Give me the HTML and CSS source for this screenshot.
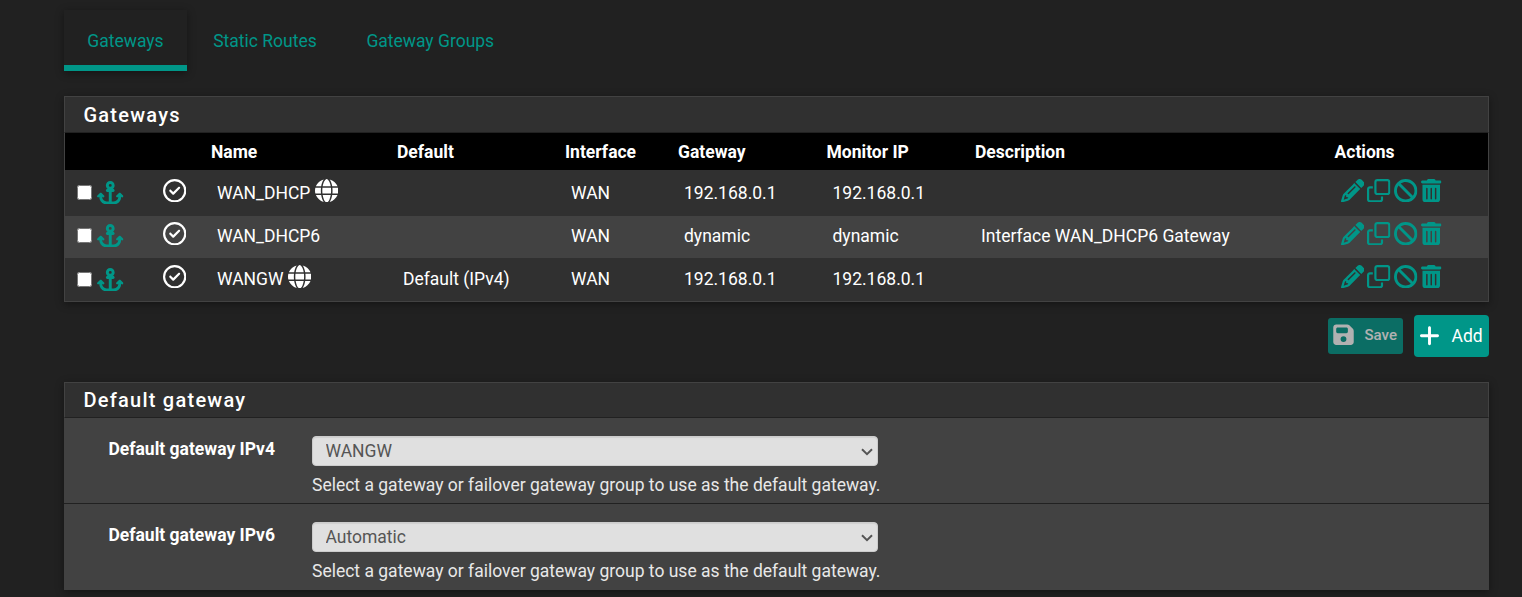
FILE: index.html
```html
<!DOCTYPE html>
<html lang="en">
<head>
    <meta charset="UTF-8">
    <meta name="viewport" content="width=device-width, initial-scale=1.0">
    <title>System: Routing: Gateways</title>
    <link rel="stylesheet" href="styles.css">
</head>
<body>
    <svg class="sprite">
        <symbol id="anchor" viewBox="0 0 576 512"><path d="M320 96a32 32 0 1 1 -64 0 32 32 0 1 1 64 0zm21.1 80C367 158.8 384 129.4 384 96c0-53-43-96-96-96s-96 43-96 96c0 33.4 17 62.8 42.9 80H224c-17.7 0-32 14.3-32 32s14.3 32 32 32h32V448H208c-53 0-96-43-96-96v-6.1l7 7c9.4 9.4 24.6 9.4 33.9 0s9.4-24.6 0-33.9L97 263c-9.4-9.4-24.6-9.4-33.9 0L7 319c-9.4 9.4-9.4 24.6 0 33.9s24.6 9.4 33.9 0l7-7V352c0 88.4 71.6 160 160 160h80 80c88.4 0 160-71.6 160-160v-6.1l7 7c9.4 9.4 24.6 9.4 33.9 0s9.4-24.6 0-33.9l-56-56c-9.4-9.4-24.6-9.4-33.9 0l-56 56c-9.4 9.4-9.4 24.6 0 33.9s24.6 9.4 33.9 0l7-7V352c0 53-43 96-96 96H320V240h32c17.7 0 32-14.3 32-32s-14.3-32-32-32H341.1z"/></symbol>
        <symbol id="check" viewBox="0 0 512 512"><path d="M256 48a208 208 0 1 1 0 416 208 208 0 1 1 0-416zm0 464A256 256 0 1 0 256 0a256 256 0 1 0 0 512zM369 209c9.4-9.4 9.4-24.6 0-33.9s-24.6-9.4-33.9 0l-111 111-47-47c-9.4-9.4-24.6-9.4-33.9 0s-9.4 24.6 0 33.9l64 64c9.4 9.4 24.6 9.4 33.9 0L369 209z"/></symbol>
        <symbol id="globe" viewBox="0 0 512 512"><path d="M352 256c0 22.2-1.2 43.6-3.3 64H163.3c-2.2-20.4-3.3-41.8-3.3-64s1.2-43.6 3.3-64H348.7c2.2 20.4 3.3 41.8 3.3 64zm28.8-64H503.9c5.3 20.5 8.1 41.9 8.1 64s-2.8 43.5-8.1 64H380.8c2.1-20.6 3.2-42 3.2-64s-1.1-43.4-3.2-64zm112.6-32H376.7c-10-63.9-29.8-117.4-55.3-151.6c78.3 20.7 142 77.5 171.9 151.6zm-149.1 0H167.7c6.1-36.4 15.5-68.6 27-94.7c10.5-23.6 22.2-40.7 33.5-51.5C239.4 3.2 248.7 0 256 0s16.6 3.2 27.8 13.8c11.3 10.8 23 27.9 33.5 51.5c11.6 26 20.9 58.2 27 94.7zm-209 0H18.6C48.6 85.9 112.2 29.1 190.6 8.4C165.1 42.6 145.3 96.1 135.3 160zM8.1 192H131.2c-2.1 20.6-3.2 42-3.2 64s1.1 43.4 3.2 64H8.1C2.8 299.5 0 278.1 0 256s2.8-43.5 8.1-64zM194.7 446.6c-11.6-26-20.9-58.2-27-94.6H344.3c-6.1 36.4-15.5 68.6-27 94.6c-10.5 23.6-22.2 40.7-33.5 51.5C272.6 508.8 263.3 512 256 512s-16.6-3.2-27.8-13.8c-11.3-10.8-23-27.9-33.5-51.5zM135.3 352c10 63.9 29.8 117.4 55.3 151.6C112.2 482.9 48.6 426.1 18.6 352H135.3zm358.1 0c-30 74.1-93.6 130.9-171.9 151.6c25.5-34.2 45.2-87.7 55.3-151.6H493.4z"/></symbol>
        <symbol id="pencil" viewBox="0 0 512 512"><path d="M410.3 231l11.3-11.3-33.9-33.9-62.1-62.1L291.7 89.8l-11.3 11.3-22.6 22.6L58.6 322.9c-10.4 10.4-18 23.3-22.2 37.4L1 480.7c-2.5 8.4-.2 17.5 6.1 23.7s15.3 8.5 23.7 6.1l120.3-35.4c14.1-4.2 27-11.8 37.4-22.2L387.7 253.7 410.3 231zM160 399.4l-9.1 22.7c-4 3.1-8.5 5.4-13.3 6.9L59.4 452l23-78.1c1.4-4.9 3.8-9.4 6.9-13.3l22.7-9.1v32c0 8.8 7.2 16 16 16h32zM362.7 18.7L348.3 33.2 325.7 55.8 314.3 67.1l33.9 33.9 62.1 62.1 33.9 33.9 11.3-11.3 22.6-22.6 14.5-14.5c25-25 25-65.5 0-90.5L453.3 18.7c-25-25-65.5-25-90.5 0zm-47.4 168l-144 144c-6.2 6.2-16.4 6.2-22.6 0s-6.2-16.4 0-22.6l144-144c6.2-6.2 16.4-6.2 22.6 0s6.2 16.4 0 22.6z"/></symbol>
        <symbol id="clone" viewBox="0 0 512 512"><path d="M64 464H288c8.8 0 16-7.2 16-16V384h48v64c0 35.3-28.7 64-64 64H64c-35.3 0-64-28.7-64-64V224c0-35.3 28.7-64 64-64h64v48H64c-8.8 0-16 7.2-16 16V448c0 8.8 7.2 16 16 16zM224 304H448c8.8 0 16-7.2 16-16V64c0-8.8-7.2-16-16-16H224c-8.8 0-16 7.2-16 16V288c0 8.8 7.2 16 16 16zm-64-16V64c0-35.3 28.7-64 64-64H448c35.3 0 64 28.7 64 64V288c0 35.3-28.7 64-64 64H224c-35.3 0-64-28.7-64-64z"/></symbol>
        <symbol id="ban" viewBox="0 0 512 512"><path d="M367.2 412.5L99.5 144.8C77.1 176.1 64 214.5 64 256c0 106 86 192 192 192c41.5 0 79.9-13.1 111.2-35.5zm45.3-45.3C434.9 335.9 448 297.5 448 256c0-106-86-192-192-192c-41.5 0-79.9 13.1-111.2 35.5L412.5 367.2zM0 256a256 256 0 1 1 512 0A256 256 0 1 1 0 256z"/></symbol>
        <symbol id="trash" viewBox="0 0 448 512"><path d="M135.2 17.7C140.6 6.8 151.7 0 163.8 0H284.2c12.1 0 23.2 6.8 28.6 17.7L320 32h96c17.7 0 32 14.3 32 32s-14.3 32-32 32H32C14.3 96 0 81.7 0 64S14.3 32 32 32h96l7.2-14.3zM32 128H416V448c0 35.3-28.7 64-64 64H96c-35.3 0-64-28.7-64-64V128zm96 64c-8.8 0-16 7.2-16 16V432c0 8.8 7.2 16 16 16s16-7.2 16-16V208c0-8.8-7.2-16-16-16zm96 0c-8.8 0-16 7.2-16 16V432c0 8.8 7.2 16 16 16s16-7.2 16-16V208c0-8.8-7.2-16-16-16zm96 0c-8.8 0-16 7.2-16 16V432c0 8.8 7.2 16 16 16s16-7.2 16-16V208c0-8.8-7.2-16-16-16z"/></symbol>
        <symbol id="save" viewBox="0 0 448 512"><path d="M64 32C28.7 32 0 60.7 0 96V416c0 35.3 28.7 64 64 64H384c35.3 0 64-28.7 64-64V173.3c0-17-6.7-33.3-18.7-45.3L352 50.7C340 38.7 323.7 32 306.7 32H64zm0 96c0-17.7 14.3-32 32-32H288c17.7 0 32 14.3 32 32v64c0 17.7-14.3 32-32 32H96c-17.7 0-32-14.3-32-32V128zM224 288a64 64 0 1 1 0 128 64 64 0 1 1 0-128z"/></symbol>
        <symbol id="plus" viewBox="0 0 448 512"><path d="M256 80c0-17.7-14.3-32-32-32s-32 14.3-32 32V224H48c-17.7 0-32 14.3-32 32s14.3 32 32 32H192V432c0 17.7 14.3 32 32 32s32-14.3 32-32V288H400c17.7 0 32-14.3 32-32s-14.3-32-32-32H256V80z"/></symbol>
    </svg>

    <div class="container">
        <ul class="nav-tabs">
            <li class="active"><a href="#">Gateways</a></li>
            <li><a href="#">Static Routes</a></li>
            <li><a href="#">Gateway Groups</a></li>
        </ul>

        <div class="panel">
            <h2 class="panel-heading">Gateways</h2>
            <table class="table">
                <colgroup>
                    <col class="col-select">
                    <col class="col-status">
                    <col class="col-name">
                    <col class="col-default">
                    <col class="col-interface">
                    <col class="col-gateway">
                    <col class="col-monitor">
                    <col class="col-descr">
                    <col class="col-actions">
                </colgroup>
                <thead>
                    <tr>
                        <th></th>
                        <th></th>
                        <th>Name</th>
                        <th>Default</th>
                        <th>Interface</th>
                        <th>Gateway</th>
                        <th>Monitor IP</th>
                        <th>Description</th>
                        <th>Actions</th>
                    </tr>
                </thead>
                <tbody>
                    <tr class="row-first">
                        <td><div class="pick"><input type="checkbox"><svg class="icon anchor"><use href="#anchor"/></svg></div></td>
                        <td><div class="status"><svg class="icon"><use href="#check"/></svg></div></td>
                        <td>WAN_DHCP <svg class="icon"><use href="#globe"/></svg></td>
                        <td></td>
                        <td>WAN</td>
                        <td>192.168.0.1</td>
                        <td>192.168.0.1</td>
                        <td></td>
                        <td><div class="actions"><svg class="icon"><use href="#pencil"/></svg><svg class="icon"><use href="#clone"/></svg><svg class="icon"><use href="#ban"/></svg><svg class="icon trash"><use href="#trash"/></svg></div></td>
                    </tr>
                    <tr class="row-even">
                        <td><div class="pick"><input type="checkbox"><svg class="icon anchor"><use href="#anchor"/></svg></div></td>
                        <td><div class="status"><svg class="icon"><use href="#check"/></svg></div></td>
                        <td>WAN_DHCP6</td>
                        <td></td>
                        <td>WAN</td>
                        <td>dynamic</td>
                        <td>dynamic</td>
                        <td>Interface WAN_DHCP6 Gateway</td>
                        <td><div class="actions"><svg class="icon"><use href="#pencil"/></svg><svg class="icon"><use href="#clone"/></svg><svg class="icon"><use href="#ban"/></svg><svg class="icon trash"><use href="#trash"/></svg></div></td>
                    </tr>
                    <tr class="row-last">
                        <td><div class="pick"><input type="checkbox"><svg class="icon anchor"><use href="#anchor"/></svg></div></td>
                        <td><div class="status"><svg class="icon"><use href="#check"/></svg></div></td>
                        <td>WANGW <svg class="icon"><use href="#globe"/></svg></td>
                        <td>Default (IPv4)</td>
                        <td>WAN</td>
                        <td>192.168.0.1</td>
                        <td>192.168.0.1</td>
                        <td></td>
                        <td><div class="actions"><svg class="icon"><use href="#pencil"/></svg><svg class="icon"><use href="#clone"/></svg><svg class="icon"><use href="#ban"/></svg><svg class="icon trash"><use href="#trash"/></svg></div></td>
                    </tr>
                </tbody>
            </table>
        </div>

        <nav class="action-buttons">
            <button class="btn btn-save" disabled><svg class="icon"><use href="#save"/></svg>Save</button>
            <button class="btn btn-add"><svg class="icon"><use href="#plus"/></svg>Add</button>
        </nav>

        <div class="panel panel-form">
            <h2 class="panel-heading">Default gateway</h2>
            <div class="form-group">
                <label for="defaultgw4">Default gateway IPv4</label>
                <div class="field">
                    <select id="defaultgw4"><option>WANGW</option></select>
                    <span class="help-block">Select a gateway or failover gateway group to use as the default gateway.</span>
                </div>
            </div>
            <div class="form-group">
                <label for="defaultgw6">Default gateway IPv6</label>
                <div class="field">
                    <select id="defaultgw6"><option>Automatic</option></select>
                    <span class="help-block">Select a gateway or failover gateway group to use as the default gateway.</span>
                </div>
            </div>
        </div>
    </div>
</body>
</html>
```
FILE: styles.css
```css
* {
    box-sizing: border-box;
}

body {
    margin: 0;
    height: 597px;
    overflow: hidden;
    background-color: #212121;
    color: #fff;
    font-family: Roboto, sans-serif;
    font-size: 17.5px;
    line-height: 26px;
}

.sprite {
    display: none;
}

.container {
    width: 1425px;
    margin-left: 64px;
    padding-top: 10px;
}

.nav-tabs {
    display: flex;
    margin: 0 0 25px;
    padding: 0;
    list-style: none;
}

.nav-tabs li {
    height: 61px;
    margin-right: 3px;
    padding: 18px 23.3px 0;
    border-bottom: 6px solid transparent;
}

.nav-tabs .active {
    border-bottom-color: #009688;
    box-shadow: 0 2px 8px rgba(0, 0, 0, 0.4);
}

.nav-tabs a {
    color: #009688;
    text-decoration: none;
}

.panel {
    background-color: #303030;
    box-shadow: 0 2px 8px rgba(0, 0, 0, 0.4);
}

.panel-heading {
    height: 37px;
    margin: 0;
    padding: 5px 18.4px 0;
    border: 1px solid #424242;
    border-bottom-color: #212121;
    font-size: 20px;
    font-weight: 500;
    line-height: 26px;
    letter-spacing: 1.25px;
}

.panel-form .panel-heading {
    height: 36px;
    padding-top: 4px;
}

.table {
    width: 100%;
    border: 1px solid #424242;
    border-top: 0;
    border-collapse: separate;
    border-spacing: 0;
    table-layout: fixed;
}

.col-select { width: 85px; }
.col-status { width: 55px; }
.col-name { width: 186px; }
.col-default { width: 168px; }
.col-interface { width: 113px; }
.col-gateway { width: 148.5px; }
.col-monitor { width: 148.5px; }
.col-descr { width: 359.5px; }

th {
    height: 37px;
    padding: 0 6px;
    background-color: #000;
    font-weight: 700;
    text-align: left;
}

td {
    height: 43px;
    padding: 9px 0 0 12px;
    vertical-align: top;
    white-space: nowrap;
    line-height: 28px;
}

.row-first td {
    height: 46px;
}

.row-even td {
    height: 42px;
    padding-top: 6px;
    background-color: #424242;
}

.row-last td {
    padding-top: 7px;
}

.icon {
    display: inline-block;
    width: 23.4px;
    height: 23.4px;
    fill: currentColor;
}

td > .icon {
    margin: -4px 0 0;
    vertical-align: -3px;
}

.pick {
    display: flex;
    color: #009688;
}

.row-last .pick {
    padding-top: 1px;
}

.pick input {
    width: 15px;
    height: 15px;
    margin: 6px 5px 0 0;
}

.anchor {
    width: 26.5px;
    margin-top: 2px;
}

.status {
    display: flex;
    padding-left: 0.7px;
}

.actions {
    display: flex;
    gap: 3.5px;
    color: #009688;
}

.trash {
    width: 20.5px;
}

.action-buttons {
    display: flex;
    justify-content: flex-end;
    align-items: center;
    gap: 11px;
    margin: 13px 0 25px;
}

.btn {
    display: flex;
    align-items: center;
    padding: 0;
    border: 0;
    border-radius: 4px;
    background-color: #009688;
    color: #fff;
    font-family: inherit;
}

.btn-save {
    width: 75px;
    height: 36px;
    margin-bottom: 1px;
    padding: 0 0 1px 5px;
    border-radius: 3px;
    font-size: 15px;
    font-weight: 500;
    opacity: 0.65;
}

.btn-save .icon {
    width: 21px;
    margin-right: 10.5px;
}

.btn-add {
    width: 75px;
    height: 42px;
    padding: 0 0 1px 5px;
    font-size: 17.5px;
}

.btn-add .icon {
    width: 21px;
    margin-right: 11.5px;
}

.form-group {
    display: flex;
    height: 86px;
    padding-top: 18px;
    border-bottom: 1px solid #212121;
    background-color: #424242;
}

.form-group:last-child {
    border-bottom: 0;
}

.form-group label {
    width: 211px;
    margin-right: 37px;
    font-weight: 700;
    text-align: right;
}

.field {
    width: 600px;
    color: #e8e8e8;
}

.field select {
    display: block;
    width: 566px;
    height: 30px;
    margin-bottom: 6px;
    padding: 0 12.5px 1px;
    border: 1px solid #ccc;
    border-radius: 4px;
    background: #e0e0e0 url("data:image/svg+xml,%3Csvg xmlns='http://www.w3.org/2000/svg' width='12' height='8'%3E%3Cpath d='M1 1.2l5 5 5-5' fill='none' stroke='%23555' stroke-width='2'/%3E%3C/svg%3E") no-repeat right 4px top 11px;
    box-shadow: inset 0 1px 1px rgba(0, 0, 0, 0.075);
    color: #555;
    font-family: inherit;
    font-size: 17.5px;
    appearance: none;
}

.help-block {
    display: block;
}
```
